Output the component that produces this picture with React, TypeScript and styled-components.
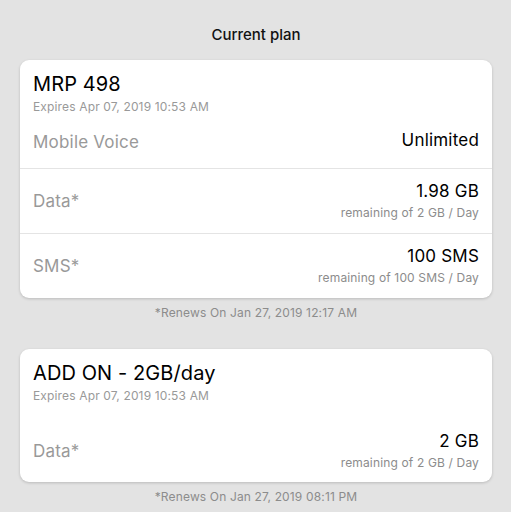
import styled, { createGlobalStyle } from "styled-components";

const GlobalStyle = createGlobalStyle`
  html, body {
    margin: 0;
    padding: 0;
    background: #e3e3e3;
  }
  body {
    font-family: Inter, "Liberation Sans", Arial, sans-serif;
    -webkit-font-smoothing: antialiased;
  }
`;

type Usage = {
  label: string;
  value: string;
  sub?: string;
};

type Plan = {
  name: string;
  expires: string;
  renews: string;
  rows: Usage[];
  spacer?: boolean;
};

const plans: Plan[] = [
  {
    name: "MRP 498",
    expires: "Expires Apr 07, 2019 10:53 AM",
    renews: "*Renews On Jan 27, 2019 12:17 AM",
    rows: [
      { label: "Mobile Voice", value: "Unlimited" },
      { label: "Data*", value: "1.98 GB", sub: "remaining of 2 GB / Day" },
      { label: "SMS*", value: "100 SMS", sub: "remaining of 100 SMS / Day" },
    ],
  },
  {
    name: "ADD ON - 2GB/day",
    expires: "Expires Apr 07, 2019 10:53 AM",
    renews: "*Renews On Jan 27, 2019 08:11 PM",
    spacer: true,
    rows: [{ label: "Data*", value: "2 GB", sub: "remaining of 2 GB / Day" }],
  },
];

function App() {
  return (
    <Page>
      <GlobalStyle />
      <Heading>Current plan</Heading>
      {plans.map((plan) => (
        <Section key={plan.name}>
          <Card>
            <CardHeader>
              <PlanName>{plan.name}</PlanName>
              <Expires>{plan.expires}</Expires>
            </CardHeader>
            {plan.rows.map((row, i) => (
              <Row key={row.label} $first={i === 0} $spacer={plan.spacer}>
                <Label>{row.label}</Label>
                <Values>
                  <Value $single={!row.sub}>{row.value}</Value>
                  {row.sub && <Sub>{row.sub}</Sub>}
                </Values>
              </Row>
            ))}
          </Card>
          <Renews>{plan.renews}</Renews>
        </Section>
      ))}
    </Page>
  );
}

export default App;

const Page = styled.div`
  width: 511px;
  height: 512px;
  overflow: hidden;
  box-sizing: border-box;
  padding: 25px 19px 0 20px;
  display: flex;
  flex-direction: column;
`;

const Heading = styled.div`
  text-align: center;
  font-size: 15px;
  line-height: 20px;
  font-weight: 500;
  color: #111;
  margin-bottom: 15px;
`;

const Section = styled.div`
  display: flex;
  flex-direction: column;
  margin-bottom: 28px;
`;

const Card = styled.div`
  background: #fff;
  border-radius: 9px;
  box-shadow: 0 1px 3px rgba(0, 0, 0, 0.18);
  display: flex;
  flex-direction: column;
`;

const CardHeader = styled.div`
  padding: 12px 13px 0;
  display: flex;
  flex-direction: column;
  gap: 3px;
`;

const PlanName = styled.div`
  font-size: 20px;
  line-height: 24px;
  color: #000;
  letter-spacing: 0.1px;
`;

const Expires = styled.div`
  font-size: 12px;
  line-height: 16px;
  color: #999;
  letter-spacing: 0.15px;
`;

const Row = styled.div<{ $first?: boolean; $spacer?: boolean }>`
  display: flex;
  align-items: center;
  justify-content: space-between;
  padding: ${(p) => (p.$spacer ? "27px 13px 11px" : "12px 13px")};
  min-height: ${(p) => (p.$first && !p.$spacer ? "29px" : "40px")};
  border-top: ${(p) => (p.$first ? "none" : "1px solid #e4e4e4")};
`;

const Label = styled.div`
  font-size: 17px;
  line-height: 20px;
  color: #999;
  letter-spacing: 0.2px;
`;

const Values = styled.div`
  display: flex;
  flex-direction: column;
  align-items: flex-end;
  gap: 3px;
`;

const Value = styled.div<{ $single?: boolean }>`
  font-size: 17px;
  line-height: 20px;
  color: #000;
  letter-spacing: 0.2px;
  margin-top: ${(p) => (p.$single ? "-3px" : "0")};
`;

const Sub = styled.div`
  font-size: 12px;
  line-height: 17px;
  color: #8c8c8c;
  letter-spacing: 0.15px;
`;

const Renews = styled.div`
  text-align: center;
  font-size: 12px;
  line-height: 16px;
  color: #8c8c8c;
  letter-spacing: 0.15px;
  margin-top: 7px;
`;
